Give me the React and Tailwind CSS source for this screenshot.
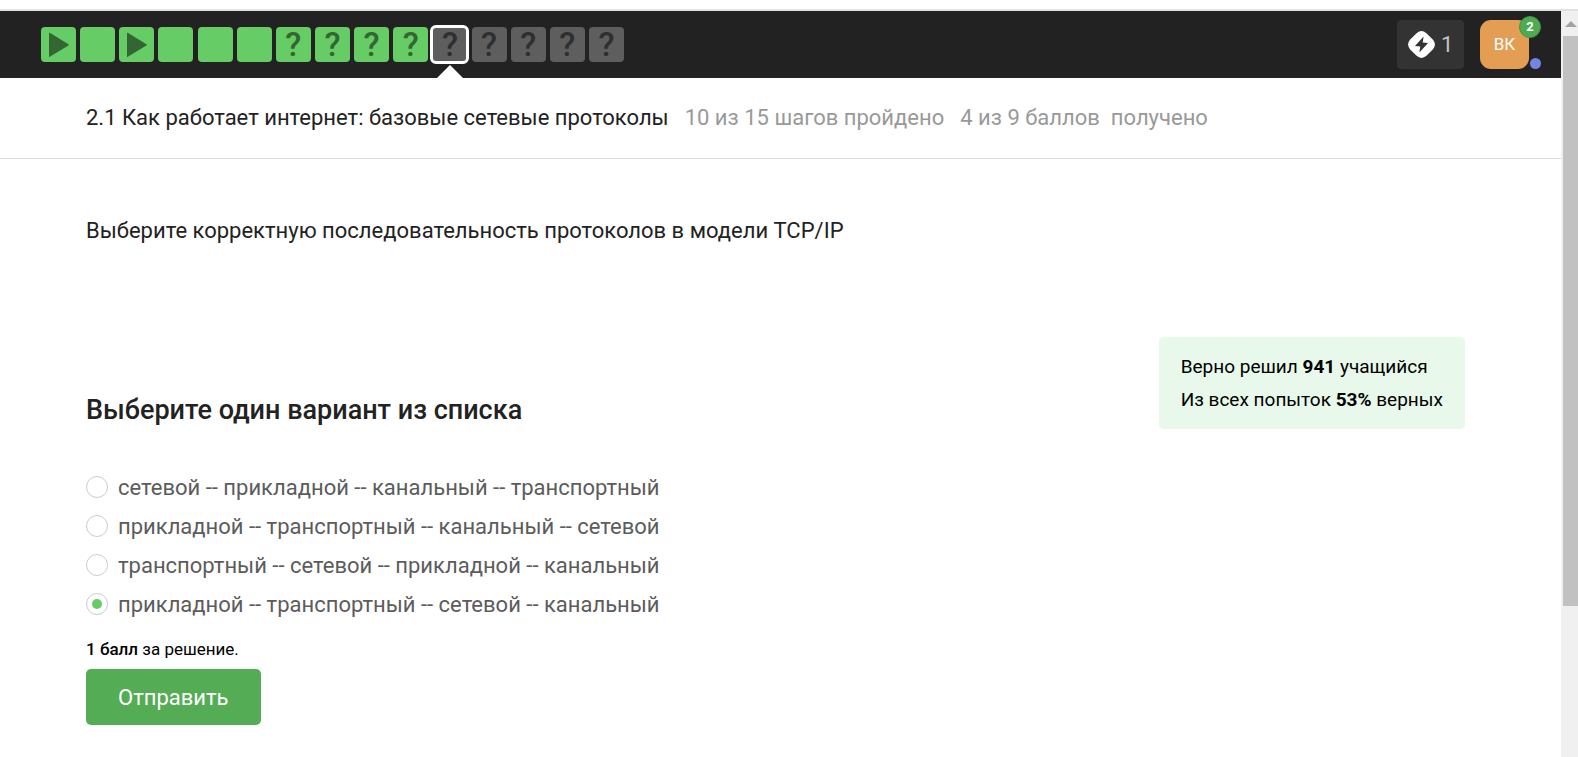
import React, { useState } from "react";

const steps = [
  { kind: "video", done: true },
  { kind: "text", done: true },
  { kind: "video", done: true },
  { kind: "text", done: true },
  { kind: "text", done: true },
  { kind: "text", done: true },
  { kind: "quiz", done: true },
  { kind: "quiz", done: true },
  { kind: "quiz", done: true },
  { kind: "quiz", done: true },
  { kind: "quiz", done: false, active: true },
  { kind: "quiz", done: false },
  { kind: "quiz", done: false },
  { kind: "quiz", done: false },
  { kind: "quiz", done: false },
];

const options = [
  "сетевой -- прикладной -- канальный -- транспортный",
  "прикладной -- транспортный -- канальный -- сетевой",
  "транспортный -- сетевой -- прикладной -- канальный",
  "прикладной -- транспортный -- сетевой -- канальный",
];

function Step({ step, number }) {
  const color = step.done ? "bg-[#66cc66] text-[#336633]" : "bg-[#5e5e5e] text-[#2f2f2f]";
  const ring = step.active ? "outline-3 -outline-offset-1 outline-white" : "";
  return (
    <a
      href={`#step-${number}`}
      aria-label={`Шаг ${number}`}
      className={`relative flex size-[35px] items-center justify-center rounded-[4px] ${color} ${ring}`}
    >
      {step.kind === "video" && (
        <svg viewBox="0 0 35 35" className="size-full" fill="currentColor" aria-hidden="true">
          <path d="M8 6.2 Q8 5.4 8.8 5.8 L27.4 17.2 Q28.2 17.9 27.4 18.5 L8.8 29.8 Q8 30.2 8 29.4 Z" />
        </svg>
      )}
      {step.kind === "quiz" && <span className="text-[33px] leading-9 font-medium">?</span>}
      {step.active && (
        <svg
          viewBox="0 0 26 13"
          className="absolute top-[38px] left-1/2 h-[13px] w-[26px] -translate-x-1/2"
          fill="#fff"
          aria-hidden="true"
        >
          <path d="M0 13 L13 0 L26 13 Z" />
        </svg>
      )}
    </a>
  );
}

function TopBar() {
  return (
    <header className="flex h-[67px] items-center justify-between bg-[#222] pr-8 pl-[41px]">
      <nav className="flex w-[583px] justify-between" aria-label="Шаги урока">
        {steps.map((step, i) => (
          <Step key={i} step={step} number={i + 1} />
        ))}
      </nav>
      <div className="flex gap-4">
        <button
          type="button"
          className="flex h-[49px] w-[67px] items-center gap-[6px] rounded-[4px] bg-[#333] pl-[11px] text-[22px] text-[#c4c4c4]"
        >
          <svg viewBox="0 0 27 27" className="size-[27px]" aria-hidden="true">
            <path
              fill="#fff"
              d="M8.6 2.2 Q13.5 -2 18.4 2.2 L24.8 8.6 Q29 13.5 24.8 18.4 L18.4 24.8 Q13.5 29 8.6 24.8 L2.2 18.4 Q-2 13.5 2.2 8.6 Z"
            />
            <path fill="#333" d="M15.6 5.6 L7 14.9 L12.3 15.6 L11.4 21.4 L20 12.1 L14.7 11.4 Z" />
          </svg>
          <span>1</span>
        </button>
        <button
          type="button"
          className="relative flex size-[49px] items-center justify-center rounded-[11px] bg-[#e39e54] text-[17px] text-white"
        >
          ВК
          <span className="absolute -top-1 -right-3 flex size-[22px] items-center justify-center rounded-full border border-[#3d9640] bg-[#4fab52] text-[13px] font-bold">
            2
          </span>
          <span className="absolute -right-3 bottom-0 size-[11px] rounded-full bg-[#7484e2]" />
        </button>
      </div>
    </header>
  );
}

function Scrollbar() {
  return (
    <div className="flex w-[17px] shrink-0 flex-col bg-[#f0f0f0] pl-[2px]" aria-hidden="true">
      <div className="flex h-[25px] items-center justify-center">
        <svg viewBox="0 0 12 6" className="h-[6px] w-3" fill="#a3a3a3">
          <path d="M0 6 L6 0 L12 6 Z" />
        </svg>
      </div>
      <div className="h-[570px] bg-[#c1c1c1]" />
    </div>
  );
}

export default function App() {
  const [selected, setSelected] = useState(3);

  return (
    <div className="flex min-h-screen flex-col bg-white pt-[9px] font-['Roboto',sans-serif] text-[#222]">
      <div className="h-[2px] bg-[#dfe1e2]" />
      <div className="flex grow">
        <div className="min-w-0 grow">
          <TopBar />
          <div className="flex h-[81px] items-center gap-4 border-b border-[#dcdcdc] px-[86px] pb-[2px] text-[22px]">
            <h1>2.1 Как работает интернет: базовые сетевые протоколы</h1>
            <p className="text-[#999]">10 из 15 шагов пройдено</p>
            <p className="whitespace-pre text-[#999]">4 из 9 баллов{"  "}получено</p>
          </div>
          <main className="pr-24 pl-[86px]">
            <p className="pt-14 text-[22px] leading-8">
              Выберите корректную последовательность протоколов в модели TCP/IP
            </p>
            <div className="flex items-start justify-between pt-[90px]">
              <h2 className="pt-[57px] text-[27px] leading-8 font-medium">Выберите один вариант из списка</h2>
              <div className="rounded-[5px] bg-[#e8f8ea] px-[22px] py-[13px] text-[19px] leading-[33px] text-black">
                <p>
                  Верно решил <b>941</b> учащийся
                </p>
                <p>
                  Из всех попыток <b>53%</b> верных
                </p>
              </div>
            </div>
            <form onSubmit={(e) => e.preventDefault()}>
              <fieldset className="pt-[39px]" aria-label="Варианты ответа">
                {options.map((text, i) => (
                  <label key={text} className="flex h-[39px] items-center gap-[10px] text-[22px] text-[#5c5c5c]">
                    <input
                      type="radio"
                      name="answer"
                      checked={selected === i}
                      onChange={() => setSelected(i)}
                      className="mb-[2px] size-[22px] shrink-0 appearance-none rounded-full border border-[#ccc] bg-white bg-clip-content p-[5px] checked:bg-[#66cc66]"
                    />
                    {text}
                  </label>
                ))}
              </fieldset>
              <p className="pt-[13px] text-[17px] leading-6 text-black">
                <b className="font-medium">1 балл</b> за решение.
              </p>
              <button
                type="submit"
                className="mt-2 h-14 rounded-[5px] bg-[#54ad54] px-8 text-[22px] text-white"
              >
                Отправить
              </button>
            </form>
          </main>
        </div>
        <Scrollbar />
      </div>
    </div>
  );
}
